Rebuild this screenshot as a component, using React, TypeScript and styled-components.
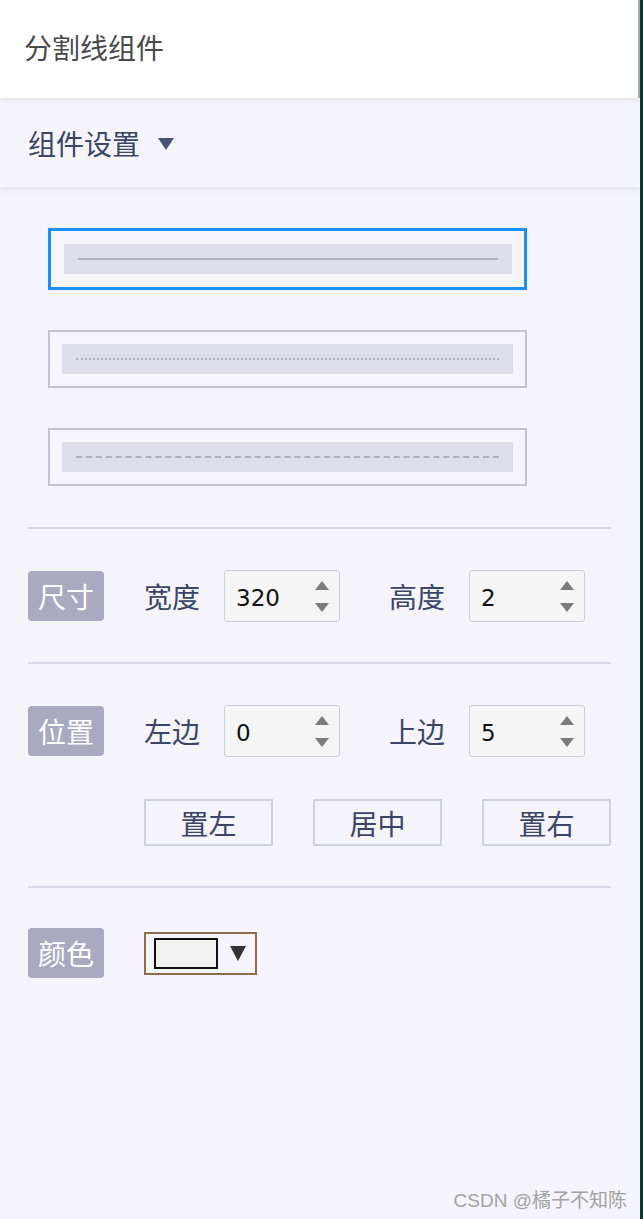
import React, { useState } from "react";
import styled, { createGlobalStyle } from "styled-components";

const Global = createGlobalStyle`
  html, body { margin: 0; padding: 0; background: #0c3a31; }
  body { font-family: "Noto Sans CJK SC", "Noto Sans", sans-serif; }
  * { box-sizing: border-box; }
`;

const Page = styled.div`
  width: 640px;
  min-height: 1219px;
  background: #f4f4fa;
  display: flex;
  flex-direction: column;
`;

const Header = styled.header`
  height: 98px;
  background: #fff;
  display: flex;
  align-items: center;
  padding-left: 24px;
  border-right: 2px solid #a9a9a9;
  box-shadow: 0 2px 5px rgba(0, 0, 0, 0.08);
  position: relative;
  z-index: 2;
`;

const Title = styled.h1`
  margin: 0;
  font-size: 28px;
  font-weight: 400;
  color: #4a4a4a;
  line-height: 1;
  padding-bottom: 4px;
`;

const SettingsBar = styled.div`
  height: 89px;
  display: flex;
  align-items: center;
  gap: 18px;
  padding-left: 28px;
  background: #f4f4fa;
  box-shadow: 0 3px 6px rgba(0, 0, 0, 0.07);
  position: relative;
  z-index: 1;
`;

const BarTitle = styled.span`
  font-size: 28px;
  color: #3c4468;
  line-height: 1;
`;

const Caret = styled.span`
  width: 0;
  height: 0;
  border-left: 8px solid transparent;
  border-right: 8px solid transparent;
  border-top: 12px solid #4b5273;
  margin-top: 2px;
`;

const Content = styled.main`
  padding: 0 29px 0 28px;
  display: flex;
  flex-direction: column;
`;

const OptionList = styled.div`
  display: flex;
  flex-direction: column;
  gap: 40px;
  padding: 41px 0 41px 20px;
`;

const OptionBox = styled.div<{ $active?: boolean }>`
  width: 479px;
  border: ${(p) => (p.$active ? "3px solid #1c8ff0" : "2px solid #c4c2d3")};
  padding: ${(p) => (p.$active ? "13px 12px 13px 13px" : "12px 12px")};
  background: #f5f5fb;
  cursor: pointer;
`;

const OptionInner = styled.div`
  height: 30px;
  background: #dedeea;
  display: flex;
  align-items: center;
  padding: 0 14px;
`;

const Line = styled.div<{ $kind: "solid" | "dotted" | "dashed" }>`
  flex: 1;
  border-top: 2px ${(p) => p.$kind} #b1b0bf;
`;

const Rule = styled.hr`
  margin: 0;
  border: none;
  height: 2px;
  background: #d9d8e8;
`;

const Section = styled.section`
  display: flex;
  flex-direction: column;
  gap: 42px;
  padding: 41px 0 40px;
`;

const Row = styled.div`
  display: flex;
  align-items: center;
  height: 52px;
`;

const Badge = styled.span`
  width: 76px;
  height: 50px;
  border-radius: 4px;
  background: #a9a9bf;
  color: #fff;
  font-size: 28px;
  display: flex;
  align-items: center;
  justify-content: center;
  margin-right: 40px;
  line-height: 1;
`;

const FieldLabel = styled.span<{ $gapLeft?: number }>`
  font-size: 28px;
  color: #3c4468;
  line-height: 1;
  margin-left: ${(p) => p.$gapLeft ?? 0}px;
  margin-right: 24px;
`;

const NumberBox = styled.div`
  width: 116px;
  height: 52px;
  background: #f5f5f5;
  border: 1px solid #c7d0d9;
  border-radius: 3px;
  display: flex;
  align-items: center;
  padding: 0 10px 0 11px;
`;

const NumberInput = styled.input`
  flex: 1;
  min-width: 0;
  border: none;
  outline: none;
  background: transparent;
  font-family: "DejaVu Sans", "Noto Sans", sans-serif;
  font-size: 23px;
  color: #111;
  padding: 4px 0 0;
`;

const Spinner = styled.div`
  display: flex;
  flex-direction: column;
  gap: 13px;
  align-items: center;
`;

const Arrow = styled.span<{ $up?: boolean }>`
  width: 0;
  height: 0;
  border-left: 7px solid transparent;
  border-right: 7px solid transparent;
  ${(p) => (p.$up ? "border-bottom: 9px solid #7b7b7b;" : "border-top: 9px solid #7b7b7b;")}
`;

const ButtonRow = styled.div`
  display: flex;
  gap: 40px;
  margin-left: 116px;
`;

const AlignButton = styled.button`
  width: 129px;
  height: 47px;
  border: 2px solid #cbd4dd;
  background: #f4f4fa;
  font-family: "Noto Sans CJK SC", sans-serif;
  font-size: 28px;
  color: #3c4468;
  padding: 0;
  line-height: 1;
  cursor: pointer;
`;

const ColorSection = styled.section`
  padding: 39px 0 0;
`;

const ColorPicker = styled.div`
  width: 113px;
  height: 43px;
  border: 2px solid #8c6d50;
  display: flex;
  align-items: center;
  padding-left: 8px;
  gap: 12px;
`;

const Swatch = styled.span`
  width: 64px;
  height: 31px;
  border: 2px solid #111;
  background: #f2f2f2;
`;

const PickerCaret = styled.span`
  width: 0;
  height: 0;
  border-left: 8px solid transparent;
  border-right: 8px solid transparent;
  border-top: 15px solid #333;
`;

const Footer = styled.footer`
  margin-top: auto;
  padding: 0 13px 7px 0;
  text-align: right;
  font-family: "Liberation Sans", "Noto Sans CJK SC", sans-serif;
  font-size: 19px;
  color: #a3a3a3;
`;

function NumField({ value }: { value: string }) {
  return (
    <NumberBox>
      <NumberInput defaultValue={value} />
      <Spinner>
        <Arrow $up />
        <Arrow />
      </Spinner>
    </NumberBox>
  );
}

export default function App() {
  const [active, setActive] = useState(0);
  const kinds: ("solid" | "dotted" | "dashed")[] = ["solid", "dotted", "dashed"];
  return (
    <>
      <Global />
      <Page>
        <Header>
          <Title>分割线组件</Title>
        </Header>
        <SettingsBar>
          <BarTitle>组件设置</BarTitle>
          <Caret />
        </SettingsBar>
        <Content>
          <OptionList>
            {kinds.map((k, i) => (
              <OptionBox key={k} $active={active === i} onClick={() => setActive(i)}>
                <OptionInner>
                  <Line $kind={k} />
                </OptionInner>
              </OptionBox>
            ))}
          </OptionList>
          <Rule />
          <Section>
            <Row>
              <Badge>尺寸</Badge>
              <FieldLabel>宽度</FieldLabel>
              <NumField value="320" />
              <FieldLabel $gapLeft={49}>高度</FieldLabel>
              <NumField value="2" />
            </Row>
          </Section>
          <Rule />
          <Section>
            <Row>
              <Badge>位置</Badge>
              <FieldLabel>左边</FieldLabel>
              <NumField value="0" />
              <FieldLabel $gapLeft={49}>上边</FieldLabel>
              <NumField value="5" />
            </Row>
            <ButtonRow>
              <AlignButton>置左</AlignButton>
              <AlignButton>居中</AlignButton>
              <AlignButton>置右</AlignButton>
            </ButtonRow>
          </Section>
          <Rule />
          <ColorSection>
            <Row>
              <Badge>颜色</Badge>
              <ColorPicker>
                <Swatch />
                <PickerCaret />
              </ColorPicker>
            </Row>
          </ColorSection>
        </Content>
        <Footer>CSDN @橘子不知陈</Footer>
      </Page>
    </>
  );
}
